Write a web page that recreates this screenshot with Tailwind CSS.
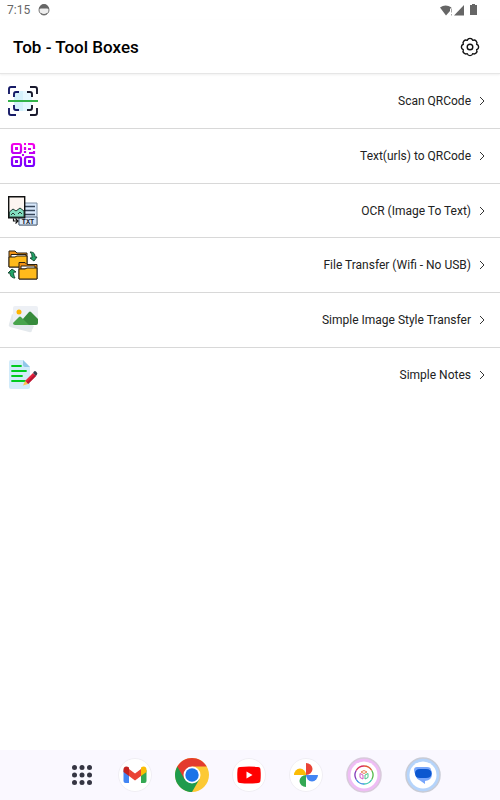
<!DOCTYPE html>
<html lang="en">
    <head>
        <meta charset="UTF-8" />
        <meta name="viewport" content="width=device-width, initial-scale=1.0" />
        <title>Tob - Tool Boxes</title>

        <!-- Scripts -->
        <script src="https://cdn.jsdelivr.net/npm/@tailwindcss/browser@4"></script>
    </head>

    <body class="flex min-h-screen flex-col bg-white font-['Roboto',sans-serif] text-black">
        <!-- Status bar -->
        <div class="flex h-5 items-center justify-between pr-5 pl-[7px] text-[#666]">
            <div class="flex items-center gap-2">
                <span class="text-[12px] leading-5">7:15</span>
                <svg class="size-3" viewBox="0 0 12 12">
                    <circle cx="6" cy="6" r="5" fill="#eee" stroke="#777" />
                    <path d="M1 5a5 5 0 0 1 10 0L9 4.500H3z" fill="#666" />
                    <path d="M3 9q3 2 6 0v1q-3 2-6 0z" fill="#666" />
                </svg>
            </div>
            <div class="flex items-center gap-1">
                <svg class="h-3 w-6" viewBox="0 0 24 12">
                    <path d="M0 3.500Q5.500-.5 11.500 3.500L10 5v2l-4 4.500z" fill="#666" />
                    <path d="M11.500 4.500v4M11.500 10v1.500" stroke="#aaa" />
                    <path d="M14 11.500 24 1v10.500z" fill="#666" />
                </svg>
                <svg class="h-3 w-3" viewBox="0 0 12 12">
                    <path d="M4 0h3v1h2v10H2V1h2z" fill="#666" />
                </svg>
            </div>
        </div>

        <!-- App bar -->
        <header class="flex h-[54px] items-center justify-between border-b border-[#e6e6e6] pr-5 pl-[13px] shadow-[0_1px_2px_#f0f0f0]">
            <h1 class="text-[17px] leading-6 font-medium">Tob - Tool Boxes</h1>
            <button type="button" aria-label="Settings" class="size-5">
                <svg class="size-5" viewBox="0 0 20 20" fill="none" stroke="#111" stroke-width="1.400" stroke-linejoin="round">
                    <path d="M7.250 3.350A2.900 2.900 0 0 1 12.750 3.350 2.900 2.900 0 0 1 16.650 7.250 2.900 2.900 0 0 1 16.650 12.750 2.900 2.900 0 0 1 12.750 16.650 2.900 2.900 0 0 1 7.250 16.650 2.900 2.900 0 0 1 3.350 12.750 2.900 2.900 0 0 1 3.350 7.250 2.900 2.900 0 0 1 7.250 3.350z" />
                    <circle cx="10" cy="10" r="2.800" />
                </svg>
            </button>
        </header>

        <!-- Tools -->
        <main class="flex-1">
            <nav class="divide-y divide-[#d8d8d8] text-[12px] leading-4 text-[#222]">
                <a href="#scan" class="flex h-[55px] items-center justify-between pr-[14px] pl-2">
                    <svg class="size-[30px]" viewBox="0 0 30 30" fill="none">
                        <path d="M6 5h9v20H6z" fill="#d5f1fb" />
                        <path d="M15 5h9v20h-9z" fill="#e6f8ff" />
                        <g stroke-width="1.900">
                            <path d="M1 8V3q0-2 2-2h5M1 22v5q0 2 2 2h5M6 11V8q0-2 2-2h3M6 19v3q0 2 2 2h3" stroke="#161b67" />
                            <path d="M22 1h5q2 0 2 2v5M29 22v5q0 2-2 2h-5M19 6h3q2 0 2 2v3M24 19v3q0 2-2 2h-3" stroke="#19192c" />
                        </g>
                        <path d="M0 15h30" stroke="#34b44a" stroke-width="2" />
                    </svg>
                    <span class="flex items-center gap-[7px]">Scan QRCode
                        <svg class="h-3 w-2" viewBox="0 0 8 12" fill="none" stroke="#333"><path d="m2 2 4 4-4 4" /></svg>
                    </span>
                </a>
                <a href="#qrcode" class="flex h-[55px] items-center justify-between pr-[14px] pl-2">
                    <svg class="size-[30px]" viewBox="0 0 30 30">
                        <defs>
                            <linearGradient id="qr" gradientUnits="userSpaceOnUse" x1="0" y1="3" x2="0" y2="27">
                                <stop offset="0" stop-color="#f500eb" />
                                <stop offset="1" stop-color="#6900ff" />
                            </linearGradient>
                        </defs>
                        <g fill="none" stroke="url(#qr)" stroke-width="2.200">
                            <rect x="4" y="3" width="9" height="9" rx="2" />
                            <rect x="4" y="16" width="9" height="9" rx="2" />
                            <rect x="17" y="16" width="9" height="9" rx="2" />
                            <path d="M20 3h4q2 0 2 2v3M26 10v2h-5M17 6v3M17 10v2" />
                        </g>
                        <path d="M7 6h3v3H7zM7 19h3v3H7zM20 19h3v3h-3zM16 2h2v2h-2zM20 7h3v2h-3zM14 13h2v2h-2z" fill="url(#qr)" />
                    </svg>
                    <span class="flex items-center gap-[7px]">Text(urls) to QRCode
                        <svg class="h-3 w-2" viewBox="0 0 8 12" fill="none" stroke="#333"><path d="m2 2 4 4-4 4" /></svg>
                    </span>
                </a>
                <a href="#ocr" class="flex h-[54px] items-center justify-between pr-[14px] pl-2">
                    <svg class="size-[30px]" viewBox="0 0 30 30">
                        <path d="M11 7h18v22H11z" fill="#d8e8fb" stroke="#7b8ca0" />
                        <path d="M17 10.500h10M17 14.500h10M17 18.500h10" stroke="#36455a" stroke-width="1.300" />
                        <path d="M11 21h18v8H11z" fill="#d8e8fb" stroke="#536479" />
                        <text x="20" y="27.500" text-anchor="middle" font-family="Liberation Mono" font-size="7" font-weight="700" fill="#18202b">TXT</text>
                        <path d="M.7.700h16v21H.700z" fill="#fcf5f0" stroke="#111" stroke-width="1.400" />
                        <path d="M1.400 16 5 13l3 2 4-3 4 3v6H1.400z" fill="#83dfc0" stroke="#263d36" />
                        <path d="m3 19 2-2 2 2M10 18l2-2 2 2" fill="none" stroke="#263d36" />
                        <path d="M5.500 22.500v2.500h4M7.500 22.500 10 25l-2.500 2.500" fill="none" stroke="#111" stroke-width="1.200" />
                    </svg>
                    <span class="flex items-center gap-[7px]">OCR (Image To Text)
                        <svg class="h-3 w-2" viewBox="0 0 8 12" fill="none" stroke="#333"><path d="m2 2 4 4-4 4" /></svg>
                    </span>
                </a>
                <a href="#transfer" class="flex h-[55px] items-center justify-between pr-[14px] pl-2">
                    <svg class="size-[30px]" viewBox="0 0 30 30" stroke-linejoin="round">
                        <g stroke="#2b2112">
                            <path d="M1 17V1h6l2 2h10v14z" fill="#f09216" />
                            <path d="M3 4.500h15V8H3z" fill="#fff" />
                            <path d="M1 7h6l2-1h10v11H1z" fill="#ffba1b" />
                            <path d="M11 29V12.500h6l2 2h10V29z" fill="#f09216" />
                            <path d="M13 16h14v3H13z" fill="#fff" />
                            <path d="M11 19h6l2-1h10v11H11z" fill="#ffba1b" />
                        </g>
                        <path d="M22 2c4 0 5 2 5 5h2l-3 4-4-3h2c0-3 0-4-2-6z" fill="#22a568" stroke="#174c35" />
                        <path d="M7 28c-4 0-5-3-5-5H0l4-4 4 3H6c-1 2 0 4 1 6z" fill="#22a568" stroke="#174c35" />
                    </svg>
                    <span class="flex items-center gap-[7px]">File Transfer (Wifi - No USB)
                        <svg class="h-3 w-2" viewBox="0 0 8 12" fill="none" stroke="#333"><path d="m2 2 4 4-4 4" /></svg>
                    </span>
                </a>
                <a href="#style" class="flex h-[55px] items-center justify-between pr-[14px] pl-2">
                    <svg class="size-[30px]" viewBox="0 0 30 30">
                        <path d="m4 9 22 12-2 4q0 3-3 2L2 22q-2-1-1-3z" fill="#e4e9ed" />
                        <rect x="5" y="1" width="25" height="19" rx="2" fill="#edf0f5" />
                        <circle cx="11" cy="7" r="2.500" fill="#ffb400" />
                        <path d="m14 15 7-8q1-1 2 0l7 7v4q0 2-2 2H10z" fill="#378b3c" />
                        <path d="m5 18 6-6q1-1 2 0l8 8H7q-2 0-2-2z" fill="#48a44c" />
                    </svg>
                    <span class="flex items-center gap-[7px]">Simple Image Style Transfer
                        <svg class="h-3 w-2" viewBox="0 0 8 12" fill="none" stroke="#333"><path d="m2 2 4 4-4 4" /></svg>
                    </span>
                </a>
                <a href="#notes" class="flex h-[54px] items-center justify-between pr-[14px] pl-2">
                    <svg class="size-[30px]" viewBox="0 0 30 30">
                        <path d="M3 0h12l7 7v20q0 2-2 2H3q-2 0-2-2V2q0-2 2-2z" fill="#d2ebfa" />
                        <path d="M15 0v5q0 2 2 2h5z" fill="#91c7e8" />
                        <path d="M4 6h9M4 11h14M4 16h10M4 21h13" stroke="#00cb20" stroke-width="1.800" stroke-linecap="round" />
                        <path d="m17 21 8-8 3 3-8 8z" fill="#e8223d" />
                        <path d="m18.500 22.500 8-8 1.500 1.500-8 8z" fill="#b81734" />
                        <path d="m25 13 1-1.500q1-1 2.500.5t.5 2.500L28 16z" fill="#3b3d4d" />
                        <path d="m17 21 3 3-5 1.500z" fill="#ffc34b" />
                    </svg>
                    <span class="flex items-center gap-[7px]">Simple Notes
                        <svg class="h-3 w-2" viewBox="0 0 8 12" fill="none" stroke="#333"><path d="m2 2 4 4-4 4" /></svg>
                    </span>
                </a>
            </nav>
        </main>

        <!-- Taskbar -->
        <footer class="flex h-[50px] items-center justify-center gap-[23px] bg-[#faf8ff] pl-[10px]">
            <button type="button" aria-label="All apps" class="w-[26px]">
                <svg class="size-[26px]" viewBox="0 0 26 26" fill="#353543">
                    <circle cx="5.500" cy="5.500" r="2.500" /><circle cx="13" cy="5.500" r="2.500" /><circle cx="20.500" cy="5.500" r="2.500" />
                    <circle cx="5.500" cy="13" r="2.500" /><circle cx="13" cy="13" r="2.500" /><circle cx="20.500" cy="13" r="2.500" />
                    <circle cx="5.500" cy="20.500" r="2.500" /><circle cx="13" cy="20.500" r="2.500" /><circle cx="20.500" cy="20.500" r="2.500" />
                </svg>
            </button>
            <button type="button" aria-label="Gmail" class="w-[34px]">
                <svg class="size-[34px]" viewBox="0 0 34 34">
                    <circle cx="17" cy="17" r="16.500" fill="#fff" stroke="#f0eef4" />
                    <path d="M5.500 12v11q0 2 2 2H11V14z" fill="#4285f4" />
                    <path d="M23 14v11h3.500q2 0 2-2V12z" fill="#34a853" />
                    <path d="M11 11v7l6 4.500 6-4.500v-7l-6 4.500z" fill="#ea4335" />
                    <path d="M5.500 14v-2.500c0-3 3-4 5.500-2v8.500z" fill="#c5221f" />
                    <path d="M28.500 14v-2.500c0-3-3-4-5.500-2v8.500z" fill="#fbbc04" />
                </svg>
            </button>
            <button type="button" aria-label="Chrome" class="w-[34px]">
                <svg class="size-[34px]" viewBox="0 0 34 34">
                    <circle cx="17" cy="17" r="17" fill="#fcc934" />
                    <path d="M17 17 2.300 8.500A17 17 0 0 0 17 34l7.400-12.800z" fill="#1e9b4c" />
                    <path d="M2.300 8.500a17 17 0 0 1 29.400 0H17L9.600 21.200z" fill="#e33b2e" />
                    <circle cx="17" cy="17" r="8.500" fill="#fff" />
                    <circle cx="17" cy="17" r="6.700" fill="#1a73e8" />
                </svg>
            </button>
            <button type="button" aria-label="YouTube" class="w-[34px]">
                <svg class="size-[34px]" viewBox="0 0 34 34">
                    <circle cx="17" cy="17" r="16.500" fill="#fff" stroke="#f0eef4" />
                    <path d="M8 9q9-1 18 0 2.500 0 2.500 3 .5 5 0 10 0 3-2.500 3-9 1-18 0-2.500 0-2.500-3-.5-5 0-10 0-3 2.500-3z" fill="#f00" />
                    <path d="m14.500 13.500 6 3.500-6 3.500z" fill="#fff" />
                </svg>
            </button>
            <button type="button" aria-label="Photos" class="w-[34px]">
                <svg class="size-[34px]" viewBox="0 0 34 34">
                    <circle cx="17" cy="17" r="16.500" fill="#fff" stroke="#f0eef4" />
                    <path d="M17 5a6.500 6 0 0 1 0 12z" fill="#ea4335" />
                    <path d="M29 17a6 6.500 0 0 1-12 0z" fill="#4285f4" />
                    <path d="M17 29a6.500 6 0 0 1 0-12z" fill="#34a853" />
                    <path d="M5 17a6 6.500 0 0 1 12 0z" fill="#fbbc04" />
                </svg>
            </button>
            <button type="button" aria-label="Tool Boxes" class="w-9">
                <svg class="size-9" viewBox="0 0 36 36" fill="none">
                    <circle cx="18" cy="18" r="17" fill="#efbdf5" stroke="#d8cadb" stroke-width="1.500" />
                    <circle cx="18" cy="18" r="13.500" fill="#fff" />
                    <g stroke-width="1.300">
                        <path d="M18 9a9 9 0 0 1 7.800 4.500" stroke="#e05a35" />
                        <path d="M25.800 13.500a9 9 0 0 1 0 9" stroke="#55b94a" />
                        <path d="M25.800 22.500A9 9 0 0 1 18 27" stroke="#3ac7b0" />
                        <path d="M18 27a9 9 0 0 1-7.800-4.500" stroke="#398be0" />
                        <path d="M10.200 22.500a9 9 0 0 1 0-9" stroke="#8138b8" />
                        <path d="M10.200 13.500A9 9 0 0 1 18 9" stroke="#d92d60" />
                    </g>
                    <path d="m17 18-3-1.500v4l3 1.500z" stroke="#d35bc5" />
                    <path d="m19 18 3-1.500v4L19 22z" stroke="#49c58a" />
                    <path d="m15 15 3-1.500 3 1.500-3 1.500z" stroke="#e5855a" />
                </svg>
            </button>
            <button type="button" aria-label="Messages" class="w-9">
                <svg class="size-9" viewBox="0 0 36 36">
                    <circle cx="18" cy="18" r="17" fill="#b5d4fb" stroke="#c8ccd6" stroke-width="1.500" />
                    <circle cx="18" cy="18" r="13.500" fill="#fff" />
                    <path d="M12 10h10q4 0 4 3 1 1 1 4 0 6-7 7v3l-5-3.500q-4-1.500-4-5.500-2-2-2-5 0-3 3-3z" fill="#77a6fb" />
                    <path d="M15 12h6q5.500 0 5.500 4.500T21 21h-6q-5 0-5-4.500t5-4.500z" fill="#0b57d0" />
                </svg>
            </button>
        </footer>
    </body>
</html>
